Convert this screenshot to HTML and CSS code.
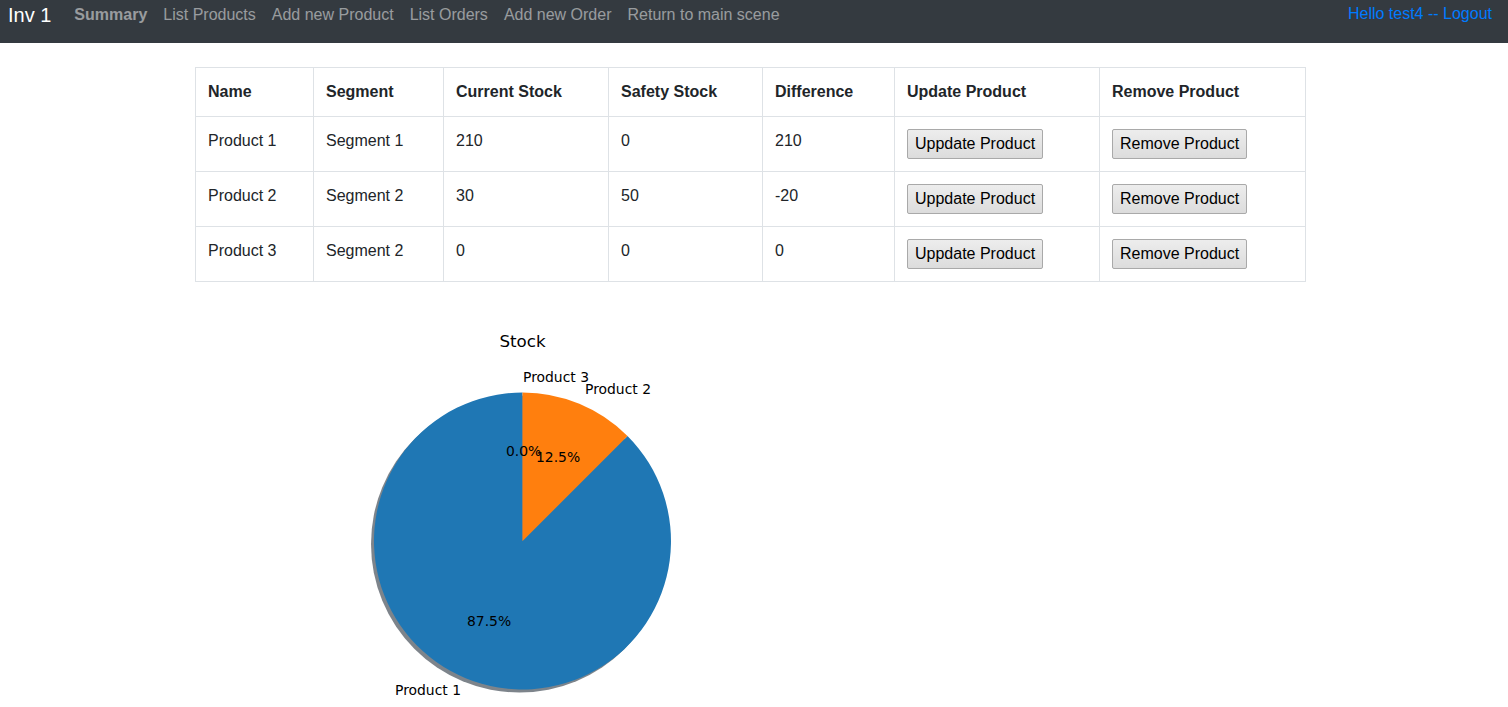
FILE: index.html
```html
<!DOCTYPE html>
<html lang="en">
<head>
<meta charset="utf-8">
<title>Inv 1 - Summary</title>
<link rel="stylesheet" href="styles.css">
</head>
<body>
<nav class="navbar">
  <div class="nav-left">
    <a class="brand" href="#">Inv 1</a>
    <ul class="nav-links">
      <li><a class="nav-link active" href="#">Summary</a></li>
      <li><a class="nav-link" href="#">List Products</a></li>
      <li><a class="nav-link" href="#">Add new Product</a></li>
      <li><a class="nav-link" href="#">List Orders</a></li>
      <li><a class="nav-link" href="#">Add new Order</a></li>
      <li><a class="nav-link" href="#">Return to main scene</a></li>
    </ul>
  </div>
  <a class="user-link" href="#">Hello test4 -- Logout</a>
</nav>

<main class="container">
  <table class="table">
    <colgroup>
      <col class="c-name"><col class="c-seg"><col class="c-cur"><col class="c-safe"><col class="c-diff"><col class="c-upd"><col class="c-rem">
    </colgroup>
    <thead>
      <tr><th>Name</th><th>Segment</th><th>Current Stock</th><th>Safety Stock</th><th>Difference</th><th>Update Product</th><th>Remove Product</th></tr>
    </thead>
    <tbody>
      <tr><td>Product 1</td><td>Segment 1</td><td>210</td><td>0</td><td>210</td><td><button class="btn">Uppdate Product</button></td><td><button class="btn">Remove Product</button></td></tr>
      <tr><td>Product 2</td><td>Segment 2</td><td>30</td><td>50</td><td>-20</td><td><button class="btn">Uppdate Product</button></td><td><button class="btn">Remove Product</button></td></tr>
      <tr><td>Product 3</td><td>Segment 2</td><td>0</td><td>0</td><td>0</td><td><button class="btn">Uppdate Product</button></td><td><button class="btn">Remove Product</button></td></tr>
    </tbody>
  </table>

  <svg class="chart" width="640" height="480" viewBox="0 0 640 480" xmlns="http://www.w3.org/2000/svg">
    <rect x="0" y="0" width="640" height="480" fill="#ffffff"/>
    <text class="chart-title" x="327.5" y="48" text-anchor="middle">Stock</text>
    <circle cx="324.5" cy="245" r="148.5" fill="#6f777e" opacity="0.9"/>
    <path d="M327.5 242 L432.5 137 A148.5 148.5 0 1 1 327.5 93.5 Z" fill="#1f77b4"/>
    <path d="M327.5 242 L327.5 93.5 A148.5 148.5 0 0 1 432.5 137 Z" fill="#ff7f0e"/>
    <text class="chart-label" x="328" y="83">Product 3</text>
    <text class="chart-label" x="390" y="95">Product 2</text>
    <text class="chart-label" x="311" y="157">0.0%</text>
    <text class="chart-label" x="341" y="163">12.5%</text>
    <text class="chart-label" x="272" y="327">87.5%</text>
    <text class="chart-label" x="200" y="396">Product 1</text>
  </svg>
</main>
</body>
</html>
```

FILE: styles.css
```css
* { box-sizing: border-box; }

html, body {
  margin: 0;
  padding: 0;
  background: #fff;
}

body {
  font-family: "Liberation Sans", Arial, Helvetica, sans-serif;
  font-size: 16px;
  line-height: 1.5;
  color: #212529;
}

.navbar {
  height: 43px;
  background: #343a40;
  display: flex;
  justify-content: space-between;
  align-items: flex-start;
  padding: 0 16px 0 8px;
}

.nav-left {
  display: flex;
  align-items: center;
  height: 30px;
}

.brand {
  color: #fff;
  font-size: 20px;
  line-height: 30px;
  text-decoration: none;
  margin-right: 15px;
  white-space: nowrap;
}

.nav-links {
  list-style: none;
  margin: 0;
  padding: 0;
  display: flex;
  align-items: center;
}

.nav-link {
  display: block;
  padding: 0 8px;
  color: rgba(255, 255, 255, 0.5);
  text-decoration: none;
  line-height: 24px;
}

.nav-link.active {
  font-weight: bold;
}

.user-link {
  color: #007bff;
  text-decoration: none;
  line-height: 24px;
  margin-top: 2px;
}

.container {
  width: 1110px;
  margin: 24px 0 0 195px;
}

.table {
  width: 1110px;
  border-collapse: collapse;
  table-layout: fixed;
  margin-bottom: 17px;
}

.c-name { width: 118px; }
.c-seg { width: 130px; }
.c-cur { width: 165px; }
.c-safe { width: 154px; }
.c-diff { width: 132px; }
.c-upd { width: 205px; }
.c-rem { width: 206px; }

.table th,
.table td {
  border: 1px solid #dee2e6;
  padding: 12px;
  vertical-align: top;
  text-align: left;
  line-height: 24px;
}

.table th {
  font-weight: bold;
  vertical-align: bottom;
}

.btn {
  font-family: "Liberation Sans", Arial, Helvetica, sans-serif;
  font-size: 16px;
  line-height: 24px;
  color: #000;
  padding: 2px 7px;
  border: 1px solid #a9a9a9;
  border-radius: 2px;
  background: linear-gradient(#ededed, #dcdcdc);
  margin: 0;
  cursor: pointer;
  white-space: nowrap;
}

.chart {
  display: block;
}

.chart-title {
  font-family: "DejaVu Sans", sans-serif;
  font-size: 16.7px;
  fill: #000;
}

.chart-label {
  font-family: "DejaVu Sans", sans-serif;
  font-size: 13.9px;
  fill: #000;
}
```
